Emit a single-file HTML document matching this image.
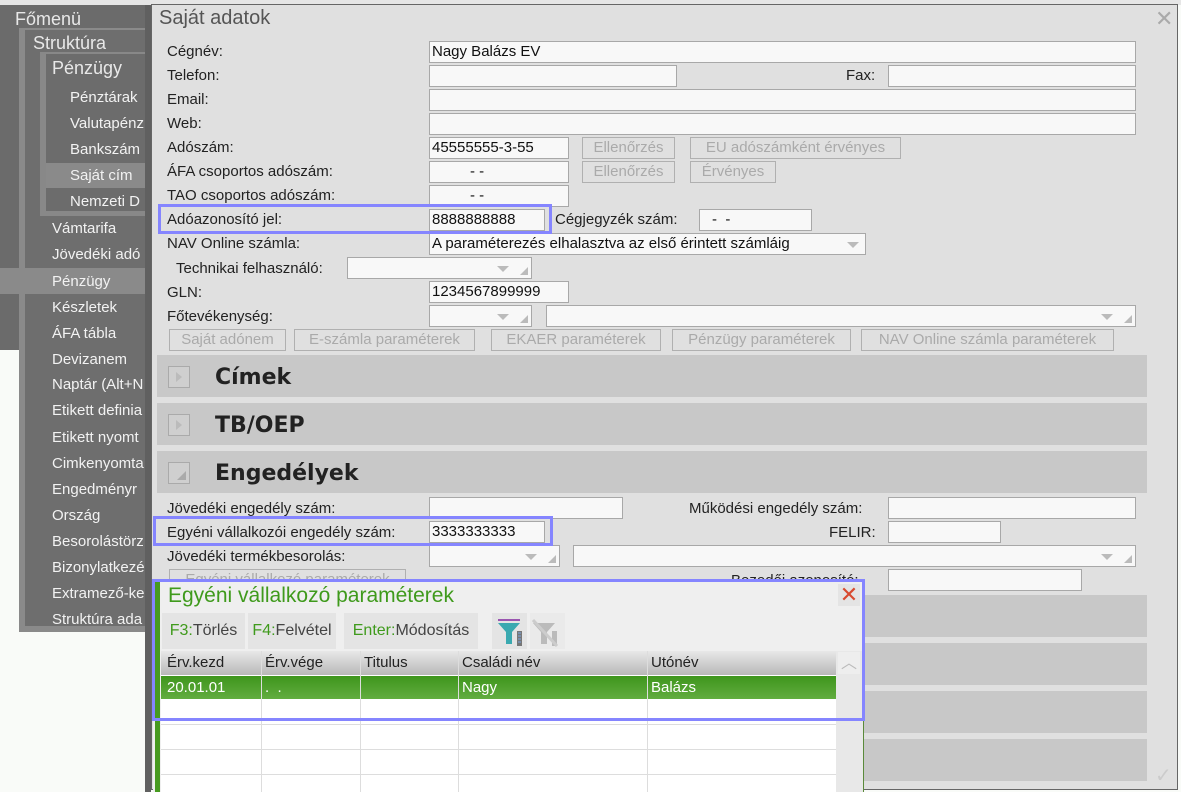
<!DOCTYPE html>
<html><head><meta charset="utf-8"><style>
*{box-sizing:border-box;margin:0;padding:0}
body{width:1181px;height:792px;position:relative;overflow:hidden;background:#f9fbf8;font-family:"Liberation Sans",sans-serif;font-size:15px;color:#222}
.a{position:absolute;white-space:nowrap}
.m{color:#f2f2f2;font-size:15px;position:absolute;white-space:nowrap}
.l{position:absolute;white-space:nowrap;font-size:15px;color:#222;line-height:18px}
.i{position:absolute;background:#f8f8f8;border:1px solid #a8a8a8;height:22px;font-size:15px;line-height:20px;padding-left:2px;color:#111;white-space:nowrap;overflow:hidden}
.b{position:absolute;border:1px solid #b0b0b0;height:22px;font-size:15px;line-height:20px;color:#aaa;text-align:center;white-space:nowrap;background:#e0e0e0}
.dd:after{content:"";position:absolute;right:6px;top:8px;border-left:6px solid transparent;border-right:6px solid transparent;border-top:6px solid #bbb}
.dr:before{content:"";position:absolute;right:3px;bottom:3px;border-left:8px solid transparent;border-bottom:8px solid #bbb}
.dr.dd:after{right:22px}
.sec{position:absolute;left:157px;width:990px;height:42px;background:#c8c8c8}
.tg{position:absolute;left:11px;top:11px;width:22px;height:22px;border:1px solid #aaa;background:#cfcfcf}
.st{position:absolute;left:58px;top:10px;font-size:22px;font-weight:bold;color:#222;font-family:"DejaVu Sans","Liberation Sans",sans-serif}
.hl{position:absolute;border:3px solid #8585ff}
.gc{position:absolute;border-right:1px solid #ddd;height:100%;top:0}
.tb{position:absolute;top:613px;height:36px;background:#e4e4e4;line-height:36px;font-size:16px;text-align:center;white-space:nowrap}
</style></head><body>
<div class="a" style="left:0;top:0;width:1181px;height:5px;background:#e6e6e6"></div>
<!-- main menu -->
<div class="a" style="left:0;top:5px;width:150px;height:345px;background:#6b6b6b"></div>
<div class="m" style="left:15px;top:9px;font-size:18px;color:#e8e8e8">Főmenü</div>
<div class="a" style="left:19px;top:28px;width:131px;height:604px;background:#8a8a8a"></div>
<div class="a" style="left:25px;top:30px;width:125px;height:596px;background:#6e6e6e"></div>
<div class="m" style="left:33px;top:33px;font-size:18px;color:#e8e8e8">Struktúra</div>
<div class="a" style="left:40px;top:52px;width:110px;height:164px;background:#888"></div>
<div class="a" style="left:46px;top:54px;width:104px;height:157px;background:#6c6c6c"></div>
<div class="m" style="left:52px;top:58px;font-size:18px;color:#e8e8e8">Pénzügy</div>
<div class="a" style="left:46px;top:163px;width:104px;height:25px;background:#8a8a8a"></div>
<div class="m" style="left:70px;top:89px">Pénztárak</div>
<div class="m" style="left:70px;top:115px">Valutapénz</div>
<div class="m" style="left:70px;top:141px">Bankszám</div>
<div class="m" style="left:70px;top:167px">Saját cím</div>
<div class="m" style="left:70px;top:193px">Nemzeti D</div>
<div class="a" style="left:0;top:268px;width:150px;height:26px;background:#8a8a8a"></div>
<div class="m" style="left:52px;top:220px">Vámtarifa</div>
<div class="m" style="left:52px;top:246px">Jövedéki adó</div>
<div class="m" style="left:52px;top:273px">Pénzügy</div>
<div class="m" style="left:52px;top:299px">Készletek</div>
<div class="m" style="left:52px;top:325px">ÁFA tábla</div>
<div class="m" style="left:52px;top:351px">Devizanem</div>
<div class="m" style="left:52px;top:376px">Naptár (Alt+N</div>
<div class="m" style="left:52px;top:402px">Etikett definia</div>
<div class="m" style="left:52px;top:429px">Etikett nyomt</div>
<div class="m" style="left:52px;top:455px">Cimkenyomta</div>
<div class="m" style="left:52px;top:481px">Engedményr</div>
<div class="m" style="left:52px;top:507px">Ország</div>
<div class="m" style="left:52px;top:533px">Besorolástörz</div>
<div class="m" style="left:52px;top:559px">Bizonylatkezé</div>
<div class="m" style="left:52px;top:585px">Extramező-ke</div>
<div class="m" style="left:52px;top:611px">Struktúra ada</div>
<div class="a" style="left:145px;top:5px;width:6px;height:787px;background:#606060"></div>
<!-- dialog -->
<div class="a" style="left:151px;top:4px;width:1027px;height:786px;background:#e0e0e0;border:1px solid #666"></div>
<div class="a" style="left:159px;top:7px;font-size:20px;color:#555">Saját adatok</div>
<div class="a" style="left:1155px;top:6px;font-size:22px;color:#aaa">✕</div>
<div class="a" style="left:1155px;top:763px;font-size:20px;color:#ccc">✓</div>

<div class="l" style="left:167px;top:43px">Cégnév:</div>
<div class="i" style="left:429px;top:41px;width:707px">Nagy Balázs EV</div>
<div class="l" style="left:167px;top:67px">Telefon:</div>
<div class="i" style="left:429px;top:65px;width:248px"></div>
<div class="l" style="left:846px;top:67px">Fax:</div>
<div class="i" style="left:888px;top:65px;width:248px"></div>
<div class="l" style="left:167px;top:91px">Email:</div>
<div class="i" style="left:429px;top:89px;width:707px"></div>
<div class="l" style="left:167px;top:115px">Web:</div>
<div class="i" style="left:429px;top:113px;width:707px"></div>
<div class="l" style="left:167px;top:139px">Adószám:</div>
<div class="i" style="left:429px;top:137px;width:140px">45555555-3-55</div>
<div class="b" style="left:582px;top:137px;width:93px">Ellenőrzés</div>
<div class="b" style="left:690px;top:137px;width:211px">EU adószámként érvényes</div>
<div class="l" style="left:167px;top:163px">ÁFA csoportos adószám:</div>
<div class="i" style="left:429px;top:161px;width:140px;padding-left:40px">- -</div>
<div class="b" style="left:582px;top:161px;width:93px">Ellenőrzés</div>
<div class="b" style="left:690px;top:161px;width:86px">Érvényes</div>
<div class="l" style="left:167px;top:187px">TAO csoportos adószám:</div>
<div class="i" style="left:429px;top:185px;width:140px;padding-left:40px">- -</div>
<div class="l" style="left:167px;top:211px">Adóazonosító jel:</div>
<div class="i" style="left:429px;top:209px;width:116px">8888888888</div>
<div class="l" style="left:555px;top:211px">Cégjegyzék szám:</div>
<div class="i" style="left:699px;top:209px;width:113px;padding-left:12px">-&nbsp; -</div>
<div class="l" style="left:167px;top:235px">NAV Online számla:</div>
<div class="i dd" style="left:429px;top:233px;width:437px">A paraméterezés elhalasztva az első érintett számláig</div>
<div class="l" style="left:176px;top:260px">Technikai felhasználó:</div>
<div class="i dd dr" style="left:347px;top:257px;width:185px"></div>
<div class="l" style="left:167px;top:284px">GLN:</div>
<div class="i" style="left:429px;top:281px;width:140px">1234567899999</div>
<div class="l" style="left:167px;top:308px">Főtevékenység:</div>
<div class="i dd dr" style="left:429px;top:305px;width:103px"></div>
<div class="i dd dr" style="left:546px;top:305px;width:590px"></div>
<div class="b" style="left:169px;top:329px;width:117px">Saját adónem</div>
<div class="b" style="left:294px;top:329px;width:181px">E-számla paraméterek</div>
<div class="b" style="left:491px;top:329px;width:170px">EKAER paraméterek</div>
<div class="b" style="left:672px;top:329px;width:179px">Pénzügy paraméterek</div>
<div class="b" style="left:861px;top:329px;width:253px">NAV Online számla paraméterek</div>

<div class="sec" style="top:355px"><div class="tg"><span style="position:absolute;left:7px;top:5px;border-top:5px solid transparent;border-bottom:5px solid transparent;border-left:6px solid #bbb"></span></div><div class="st">Címek</div></div>
<div class="sec" style="top:403px"><div class="tg"><span style="position:absolute;left:7px;top:5px;border-top:5px solid transparent;border-bottom:5px solid transparent;border-left:6px solid #bbb"></span></div><div class="st">TB/OEP</div></div>
<div class="sec" style="top:451px"><div class="tg"><span style="position:absolute;right:3px;bottom:3px;border-left:9px solid transparent;border-bottom:9px solid #aaa"></span></div><div class="st">Engedélyek</div></div>

<div class="l" style="left:167px;top:500px">Jövedéki engedély szám:</div>
<div class="i" style="left:429px;top:497px;width:194px"></div>
<div class="l" style="left:689px;top:500px">Működési engedély szám:</div>
<div class="i" style="left:888px;top:497px;width:248px"></div>
<div class="l" style="left:167px;top:524px">Egyéni vállalkozói engedély szám:</div>
<div class="i" style="left:429px;top:521px;width:116px">3333333333</div>
<div class="l" style="left:829px;top:524px">FELIR:</div>
<div class="i" style="left:888px;top:521px;width:113px"></div>
<div class="l" style="left:167px;top:548px">Jövedéki termékbesorolás:</div>
<div class="i dd dr" style="left:429px;top:545px;width:131px"></div>
<div class="i dd dr" style="left:573px;top:545px;width:563px"></div>
<div class="b" style="left:169px;top:569px;width:237px">Egyéni vállalkozó paraméterek</div>
<div class="l" style="left:731px;top:572px">Bezedői azonosító:</div>
<div class="i" style="left:888px;top:569px;width:194px"></div>
<div class="sec" style="top:595px"></div>
<div class="sec" style="top:643px"></div>
<div class="sec" style="top:691px"></div>
<div class="sec" style="top:739px"></div>

<div class="hl" style="left:158px;top:204px;width:394px;height:30px"></div>
<div class="hl" style="left:153px;top:516px;width:400px;height:30px"></div>

<!-- popup -->
<div class="a" style="left:153px;top:580px;width:711px;height:212px;background:#efefef;border-right:1px solid #5a8a3a"></div>
<div class="a" style="left:155px;top:580px;width:5px;height:212px;background:#479a20"></div>
<div class="a" style="left:168px;top:584px;font-size:21px;color:#3f9a1c">Egyéni vállalkozó paraméterek</div>
<div class="a" style="left:838px;top:584px;width:22px;height:22px;background:#e4e4e4;color:#d84a30;font-size:22px;line-height:22px;text-align:center">✕</div>
<div class="tb" style="left:162px;width:83px"><span style="color:#3f9a1c">F3:</span><span style="color:#444">Törlés</span></div>
<div class="tb" style="left:248px;width:88px"><span style="color:#3f9a1c">F4:</span><span style="color:#444">Felvétel</span></div>
<div class="tb" style="left:344px;width:134px"><span style="color:#3f9a1c">Enter:</span><span style="color:#444">Módosítás</span></div>
<svg class="a" style="left:492px;top:613px" width="74" height="36" viewBox="0 0 74 36">
<rect x="0" y="0" width="35" height="36" fill="#e4e4e4"/><rect x="38" y="0" width="35" height="36" fill="#eaeaea"/>
<rect x="6" y="6" width="22" height="2" fill="#9a55b0"/>
<path d="M6 10h22l-8 9v12h-6v-12z" fill="#3aa9b0"/>
<rect x="25" y="18" width="5" height="15" fill="#777"/><path d="M26 20h3M26 23h3M26 26h3M26 29h3" stroke="#7aa6e0"/>
<path d="M41 10h22l-8 9v12h-6v-12z" fill="#bbb"/><rect x="60" y="18" width="5" height="15" fill="#bbb"/>
<path d="M41 7l24 26" stroke="#ccc" stroke-width="3"/>
</svg>
<div class="a" style="left:161px;top:651px;width:675px;height:141px;background:#fff"></div>
<div class="a" style="left:161px;top:651px;width:675px;height:24px;background:linear-gradient(#e8e8e8,#b8b8b8);font-size:15px;line-height:24px;color:#222">
<span class="a" style="left:6px">Érv.kezd</span><span class="a" style="left:104px">Érv.vége</span><span class="a" style="left:203px">Titulus</span><span class="a" style="left:301px">Családi név</span><span class="a" style="left:490px">Utónév</span></div>
<div class="a" style="left:161px;top:676px;width:675px;height:23px;background:linear-gradient(#3e951c,#62ad40);color:#fff;font-size:15px;line-height:23px">
<span class="a" style="left:6px">20.01.01</span><span class="a" style="left:104px">.&nbsp; .</span><span class="a" style="left:301px">Nagy</span><span class="a" style="left:490px">Balázs</span></div>
<div class="a" style="left:161px;top:651px;width:675px;height:141px">
<div class="gc" style="left:100px"></div><div class="gc" style="left:199px"></div><div class="gc" style="left:297px"></div><div class="gc" style="left:486px"></div>
<div class="a" style="left:0;top:73px;width:675px;border-top:1px solid #ddd"></div>
<div class="a" style="left:0;top:98px;width:675px;border-top:1px solid #ddd"></div>
<div class="a" style="left:0;top:123px;width:675px;border-top:1px solid #ddd"></div>
</div>
<div class="a" style="left:836px;top:651px;width:27px;height:141px;background:#e8e8e8"></div>
<div class="a" style="left:838px;top:652px;width:22px;height:22px;background:#eee;color:#bbb;font-size:16px;text-align:center;line-height:24px">︿</div>
<div class="hl" style="left:152px;top:579px;width:713px;height:142px"></div>
</body></html>
